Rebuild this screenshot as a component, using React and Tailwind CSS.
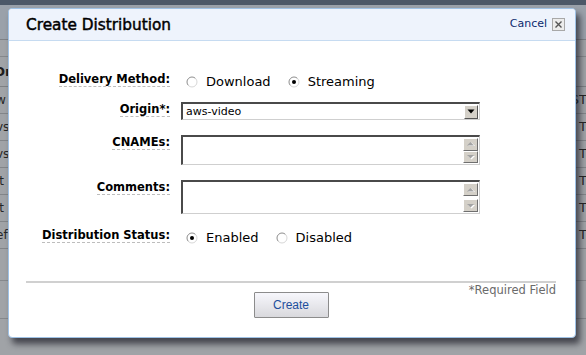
import React from "react";

function Radio({ checked }) {
  return (
    <svg width="12" height="12" viewBox="0 0 12 12" className="shrink-0">
      <circle cx="6" cy="6" r="5" fill="#fff" />
      <path d="M2.46 9.54 A5 5 0 0 1 9.54 2.46" stroke="#8c8c8c" strokeWidth="1" fill="none" />
      <path d="M9.54 2.46 A5 5 0 0 1 2.46 9.54" stroke="#d6d6d6" strokeWidth="1" fill="none" />
      {checked && <circle cx="6" cy="6" r="2" fill="#000" />}
    </svg>
  );
}

function Label({ children, align = "start" }) {
  return (
    <div className={`w-[161px] shrink-0 flex justify-end ${align === "start" ? "pt-[1px]" : ""}`}>
      <span className="inline-block border-b border-dashed border-[#bdbdbd] text-[11.5px] leading-[13px] font-bold text-black">
        {children}
      </span>
    </div>
  );
}

function Option({ checked, children }) {
  return (
    <div className="flex items-center gap-[8px]">
      <Radio checked={checked} />
      <span className="text-[13px] leading-[16px] text-black">{children}</span>
    </div>
  );
}

function ArrowBtn({ dir, disabled }) {
  const color = disabled ? "#a3a3a3" : "#000";
  return (
    <div className="w-[15px] h-[13px] bg-[#d4d0c8] border-t border-l border-white border-r border-b border-r-[#6f6f6f] border-b-[#6f6f6f] flex items-center justify-center">
      <svg width="9" height="6" viewBox="0 0 9 6">
        {dir === "up" ? (
          <>
            {disabled && <polygon points="2,5 5.5,1.5 9,5" fill="#fff" />}
            <polygon points="1,4.5 4.5,1 8,4.5" fill={color} />
          </>
        ) : (
          <>
            {disabled && <polygon points="2,2 9,2 5.5,5.5" fill="#fff" />}
            <polygon points="1,1 8,1 4.5,4.5" fill={color} />
          </>
        )}
      </svg>
    </div>
  );
}

function TextBox({ h }) {
  return (
    <div
      className={`w-[299px] ${h} bg-white border-t-2 border-l-2 border-[#4a4a4a] border-r border-b border-r-[#cfcfcf] border-b-[#cfcfcf] flex justify-end pr-[1px] pt-[1px] pb-[1px]`}
    >
      <div className="flex flex-col justify-between">
        <ArrowBtn dir="up" disabled />
        <ArrowBtn dir="down" disabled />
      </div>
    </div>
  );
}

export default function App() {
  const rows = [
    ["w", "ST"],
    ["vs", "T"],
    ["vs", "T"],
    ["it", "T"],
    ["it", "T"],
    ["ef", "T"],
  ];
  return (
    <div className="relative w-[586px] h-[355px] overflow-hidden bg-[#a0a3a7] font-['DejaVu_Sans',sans-serif]">
      {/* dimmed page behind */}
      <div className="flex flex-col">
        <div className="h-[5px] bg-[#4c5868]" />
        <div className="h-[35px] bg-[#9aa1aa] border-b border-[#7e8186]" />
        <div className="h-[17px] border-b border-[#85888c]" />
        <div className="h-[30px] flex items-center border-b border-[#7e8185]">
          <span className="ml-[-6px] text-[13px] font-bold text-[#1e1e1e]">Or</span>
        </div>
        {rows.map((r, i) => (
          <div key={i} className="h-[27px] flex items-center justify-between border-b border-[#828589]">
            <span className="ml-[-4px] text-[12px] text-[#262626]">{r[0]}</span>
            <span className="mr-[-1px] text-[13px] text-[#262626]">{r[1]}</span>
          </div>
        ))}
        <div className="h-[32px] border-b border-[#85888c]" />
        <div className="h-[38px] border-b border-[#85888c]" />
      </div>

      {/* modal */}
      <div className="absolute left-[8px] top-[8px] w-[568px] h-[330px] rounded-[4px] border border-[#9fc2e6] bg-white shadow-[4px_6px_6px_rgba(20,20,30,0.65)] flex flex-col overflow-hidden">
        <div className="h-[32px] shrink-0 bg-[#eef3fc] border-b border-[#c6dbf1] flex items-center justify-between pl-[17px] pr-[10px]">
          <span className="text-[15.3px] leading-[18px] text-black pt-[1px] [-webkit-text-stroke:0.45px_#000]">
            Create Distribution
          </span>
          <div className="flex items-center gap-[5px]">
            <span className="text-[11px] text-[#0b2a6e]">Cancel</span>
            <div className="w-[13px] h-[13px] bg-[#ececec] border border-[#a8a8a8] flex items-center justify-center">
              <svg width="7" height="7" viewBox="0 0 7 7">
                <path d="M0.5 0.5 L6.5 6.5 M6.5 0.5 L0.5 6.5" stroke="#555" strokeWidth="1.4" />
              </svg>
            </div>
          </div>
        </div>

        <div className="flex flex-col pt-[29px]">
          {/* Delivery method */}
          <div className="flex items-center gap-[11px] h-[20px]">
            <Label align="center">Delivery Method:</Label>
            <div className="flex items-center gap-[17px] pl-[5px] pt-[4px]">
              <Option>Download</Option>
              <Option checked>Streaming</Option>
            </div>
          </div>

          {/* Origin */}
          <div className="flex items-start gap-[11px] mt-[12px]">
            <Label>Origin*:</Label>
            <div className="w-[299px] h-[18px] bg-white border-t-2 border-l-2 border-[#4a4a4a] border-r border-b border-r-[#cfcfcf] border-b-[#cfcfcf] flex items-center justify-between pl-[3px] pr-[1px]">
              <span className="text-[11px] leading-[13px] text-black">aws-video</span>
              <div className="w-[14px] h-[14px] bg-[#d4d0c8] border-t border-l border-white border-r border-b border-r-[#555] border-b-[#555] flex items-center justify-center">
                <svg width="8" height="5" viewBox="0 0 8 5">
                  <polygon points="0.5,0.5 7.5,0.5 4,4.5" fill="#000" />
                </svg>
              </div>
            </div>
          </div>

          {/* CNAMEs */}
          <div className="flex items-start gap-[11px] mt-[15px]">
            <Label>CNAMEs:</Label>
            <TextBox h="h-[30px]" />
          </div>

          {/* Comments */}
          <div className="flex items-start gap-[11px] mt-[15px]">
            <Label>Comments:</Label>
            <TextBox h="h-[34px]" />
          </div>

          {/* Status */}
          <div className="flex items-center gap-[11px] h-[20px] mt-[12px]">
            <Label align="center">Distribution Status:</Label>
            <div className="flex items-center gap-[17px] pl-[5px] pt-[3px]">
              <Option checked>Enabled</Option>
              <Option>Disabled</Option>
            </div>
          </div>

          <div className="mt-[35px] ml-[17px] mr-[19px] h-[2px] bg-[#d0d0d0]" />

          <div className="grid ml-[17px] mr-[19px]">
            <div className="col-start-1 row-start-1 text-right text-[11.5px] leading-[13px] text-[#6a6a6a] pt-[1px]">
              *Required Field
            </div>
            <div className="col-start-1 row-start-1 flex justify-center pt-[9px]">
              <button className="w-[75px] h-[26px] border border-[#8c8c8c] rounded-[1px] bg-gradient-to-b from-[#f7f7fc] to-[#d9d9dd] text-[12px] text-[#1d4f9d] font-['Liberation_Sans',sans-serif]">
                Create
              </button>
            </div>
          </div>
        </div>
      </div>
    </div>
  );
}
